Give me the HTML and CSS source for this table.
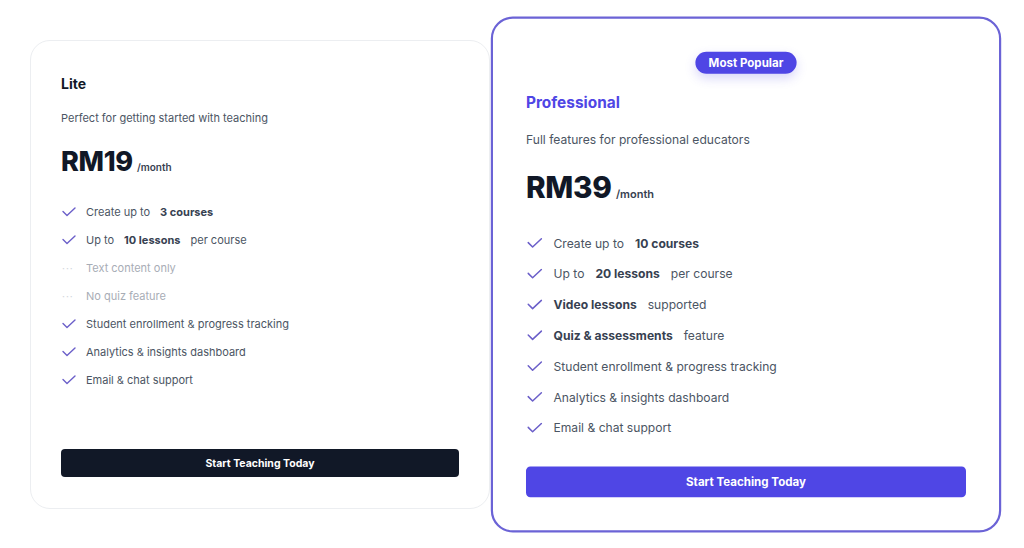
FILE: index.html
```html
<!DOCTYPE html>
<html lang="en">
<head>
<meta charset="utf-8">
<title>Pricing</title>
<link rel="stylesheet" href="styles.css">
</head>
<body>
<div class="pricing">
  <div class="card">
    <h3 class="plan">Lite</h3>
    <p class="desc">Perfect for getting started with teaching</p>
    <div class="price"><span class="amount">RM19</span><span class="per">/month</span></div>
    <ul class="features">
      <li><svg class="check" viewBox="0 0 14 10"><path d="M1 4.5 L5 8.5 L13 1"/></svg><span class="txt"><span>Create up to</span><b>3 courses</b></span></li>
      <li><svg class="check" viewBox="0 0 14 10"><path d="M1 4.5 L5 8.5 L13 1"/></svg><span class="txt"><span>Up to</span><b>10 lessons</b><span>per course</span></span></li>
      <li class="off"><span class="dots">···</span><span class="txt"><span>Text content only</span></span></li>
      <li class="off"><span class="dots">···</span><span class="txt"><span>No quiz feature</span></span></li>
      <li><svg class="check" viewBox="0 0 14 10"><path d="M1 4.5 L5 8.5 L13 1"/></svg><span class="txt"><span>Student enrollment &amp; progress tracking</span></span></li>
      <li><svg class="check" viewBox="0 0 14 10"><path d="M1 4.5 L5 8.5 L13 1"/></svg><span class="txt"><span>Analytics &amp; insights dashboard</span></span></li>
      <li><svg class="check" viewBox="0 0 14 10"><path d="M1 4.5 L5 8.5 L13 1"/></svg><span class="txt"><span>Email &amp; chat support</span></span></li>
    </ul>
    <button class="btn btn-dark">Start Teaching Today</button>
  </div>
  <div class="card card-pro">
    <div class="badge-row"><span class="badge">Most Popular</span></div>
    <h3 class="plan plan-pro">Professional</h3>
    <p class="desc">Full features for professional educators</p>
    <div class="price"><span class="amount">RM39</span><span class="per">/month</span></div>
    <ul class="features">
      <li><svg class="check" viewBox="0 0 14 10"><path d="M1 4.5 L5 8.5 L13 1"/></svg><span class="txt"><span>Create up to</span><b>10 courses</b></span></li>
      <li><svg class="check" viewBox="0 0 14 10"><path d="M1 4.5 L5 8.5 L13 1"/></svg><span class="txt"><span>Up to</span><b>20 lessons</b><span>per course</span></span></li>
      <li><svg class="check" viewBox="0 0 14 10"><path d="M1 4.5 L5 8.5 L13 1"/></svg><span class="txt"><b>Video lessons</b><span>supported</span></span></li>
      <li><svg class="check" viewBox="0 0 14 10"><path d="M1 4.5 L5 8.5 L13 1"/></svg><span class="txt"><b>Quiz &amp; assessments</b><span>feature</span></span></li>
      <li><svg class="check" viewBox="0 0 14 10"><path d="M1 4.5 L5 8.5 L13 1"/></svg><span class="txt"><span>Student enrollment &amp; progress tracking</span></span></li>
      <li><svg class="check" viewBox="0 0 14 10"><path d="M1 4.5 L5 8.5 L13 1"/></svg><span class="txt"><span>Analytics &amp; insights dashboard</span></span></li>
      <li><svg class="check" viewBox="0 0 14 10"><path d="M1 4.5 L5 8.5 L13 1"/></svg><span class="txt"><span>Email &amp; chat support</span></span></li>
    </ul>
    <button class="btn btn-primary">Start Teaching Today</button>
  </div>
</div>
</body>
</html>
```

FILE: styles.css
```css
* { box-sizing: border-box; }
html, body { margin: 0; padding: 0; background: #ffffff; }
body {
  font-family: "Inter", "Noto Sans", "Liberation Sans", sans-serif;
  color: #111827;
}
.pricing {
  display: flex;
  align-items: stretch;
  gap: 24px;
  padding: 40px 0 40px 30px;
}
.card {
  width: 460px;
  background: #fff;
  border: 1px solid #eceef1;
  border-radius: 20px;
  padding: 31px 30px 31px;
  display: flex;
  flex-direction: column;
}
.card-pro {
  width: 464px;
  border: 2px solid #6b63d6;
  padding: 30px 30px 30px;
  transform: scale(1.1);
}
.badge-row {
  display: flex;
  justify-content: center;
  margin-bottom: 14px;
}
.badge {
  display: inline-flex;
  align-items: center;
  height: 20px;
  padding: 0 12px;
  border-radius: 10px;
  background: #4f46e5;
  color: #fff;
  font-size: 10.5px;
  font-weight: 700;
  box-shadow: 0 4px 10px rgba(79, 70, 229, 0.22);
}
.plan {
  margin: 0;
  font-size: 14px;
  line-height: 24px;
  font-weight: 700;
  color: #111827;
}
.plan-pro { color: #4f46e5; }
.desc {
  margin: 13px 0 0;
  font-size: 11px;
  line-height: 18px;
  color: #4b5563;
}
.price {
  margin-top: 17px;
  display: flex;
  align-items: baseline;
  gap: 4px;
  height: 36px;
  line-height: 36px;
}
.amount {
  font-size: 27px;
  font-weight: 800;
  letter-spacing: -0.3px;
  color: #111827;
}
.per {
  font-size: 10px;
  font-weight: 600;
  color: #374151;
}
.features {
  list-style: none;
  margin: 23px 0 26px;
  padding: 0;
  display: flex;
  flex-direction: column;
  gap: 10px;
}
.features li {
  display: flex;
  align-items: center;
  height: 18px;
  font-size: 11px;
  color: #4b5563;
}
.check {
  flex: none;
  width: 14px;
  height: 10px;
  margin-left: 1px;
  margin-right: 10px;
  fill: none;
  stroke: #6b5fc9;
  stroke-width: 1.4;
  stroke-linecap: round;
  stroke-linejoin: round;
}
.dots {
  flex: none;
  width: 14px;
  margin-left: 1px;
  margin-right: 10px;
  color: #d1d5db;
  font-size: 10px;
  letter-spacing: 1px;
}
.txt {
  display: flex;
  gap: 10px;
}
.txt b { font-weight: 700; color: #374151; }
.off { color: #a8adb6 !important; }
.btn {
  flex: none;
  margin-top: auto;
  height: 28px;
  border: none;
  border-radius: 4px;
  font-family: inherit;
  font-size: 10.5px;
  font-weight: 700;
  color: #fff;
  width: 100%;
}
.btn-dark { background: #111827; }
.btn-primary { background: #4f46e5; }
```
